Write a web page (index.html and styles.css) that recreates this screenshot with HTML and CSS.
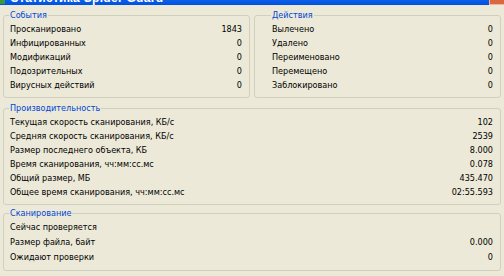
FILE: index.html
```html
<!DOCTYPE html>
<html lang="ru">
<head>
<meta charset="utf-8">
<title>Статистика Spider Guard</title>
<link rel="stylesheet" href="styles.css">
</head>
<body>
<div class="window">
  <div class="titlebar">
    <span class="app-icon"></span>
    <span class="title">Статистика Spider Guard</span>
    <span class="close-btn"></span>
  </div>
  <div class="content">
    <div class="top-row">
      <fieldset class="group group-events">
        <legend>События</legend>
        <div class="row"><span>Просканировано</span><span>1843</span></div>
        <div class="row"><span>Инфицированных</span><span>0</span></div>
        <div class="row"><span>Модификаций</span><span>0</span></div>
        <div class="row"><span>Подозрительных</span><span>0</span></div>
        <div class="row"><span>Вирусных действий</span><span>0</span></div>
      </fieldset>
      <fieldset class="group group-actions">
        <legend>Действия</legend>
        <div class="row"><span>Вылечено</span><span>0</span></div>
        <div class="row"><span>Удалено</span><span>0</span></div>
        <div class="row"><span>Переименовано</span><span>0</span></div>
        <div class="row"><span>Перемещено</span><span>0</span></div>
        <div class="row"><span>Заблокировано</span><span>0</span></div>
      </fieldset>
    </div>
    <fieldset class="group group-perf">
      <legend>Производительность</legend>
      <div class="row"><span>Текущая скорость сканирования, КБ/с</span><span>102</span></div>
      <div class="row"><span>Средняя скорость сканирования, КБ/с</span><span>2539</span></div>
      <div class="row"><span>Размер последнего объекта, КБ</span><span>8.000</span></div>
      <div class="row"><span>Время сканирования, чч:мм:сс.мс</span><span>0.078</span></div>
      <div class="row"><span>Общий размер, МБ</span><span>435.470</span></div>
      <div class="row"><span>Общее время сканирования, чч:мм:сс.мс</span><span>02:55.593</span></div>
    </fieldset>
    <fieldset class="group group-scan">
      <legend>Сканирование</legend>
      <div class="row"><span>Сейчас проверяется</span><span></span></div>
      <div class="row"><span>Размер файла, байт</span><span>0.000</span></div>
      <div class="row"><span>Ожидают проверки</span><span>0</span></div>
    </fieldset>
  </div>
</div>
</body>
</html>
```
FILE: styles.css
```css
html, body {
  margin: 0;
  padding: 0;
}
body {
  background: #ECE9D8;
  font-family: "DejaVu Sans Condensed", "DejaVu Sans", sans-serif;
  font-stretch: condensed;
  font-size: 9px;
  color: #000;
  width: 504px;
  height: 276px;
  overflow: hidden;
}
.titlebar {
  height: 5px;
  background: linear-gradient(#0a5fe8, #0050e0);
  display: flex;
  align-items: flex-start;
  overflow: hidden;
}
.app-icon {
  width: 5px;
  height: 4px;
  background: #3a9a3a;
  flex: none;
}
.title {
  font-family: "Liberation Sans", Arial, sans-serif;
  font-stretch: normal;
  color: #fff;
  font-weight: bold;
  font-size: 12px;
  line-height: 12px;
  letter-spacing: 0.3px;
  margin-left: 5px;
  margin-top: -8px;
  flex: none;
}
.close-btn {
  margin-left: auto;
  width: 14px;
  height: 4px;
  background: #d9683f;
  border-left: 1px solid #f2b39c;
  border-bottom: 1px solid #f2b39c;
  flex: none;
}
.content {
  padding: 4px 3px 0 3px;
  display: flex;
  flex-direction: column;
  gap: 3px;
}
.top-row {
  display: flex;
  gap: 4px;
  margin-bottom: 1px;
}
.group {
  margin: 0;
  border: 1px solid #D0D0BF;
  border-radius: 3px;
  padding: 0 7px 5px 6px;
  min-width: 0;
}
.group legend {
  color: #0046D5;
  padding: 0 1px;
  margin-left: -1px;
  line-height: 13px;
}
.group-events {
  width: 247px;
  box-sizing: border-box;
  flex: none;
}
.group-actions {
  flex: 1;
  padding-left: 17px;
}
.group-scan {
  margin-top: -1px;
}
.row {
  display: flex;
  justify-content: space-between;
  height: 14px;
  line-height: 14px;
  white-space: nowrap;
}
.group-scan .row {
  height: 15px;
  line-height: 15px;
}
```
